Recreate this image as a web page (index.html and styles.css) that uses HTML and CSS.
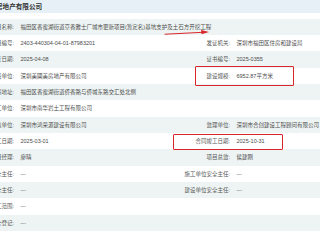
FILE: index.html
```html
<!DOCTYPE html>
<html lang="zh">
<head>
<meta charset="utf-8">
<link rel="stylesheet" href="styles.css">
</head>
<body>
<div class="page">
  <div class="title"><span>深圳美國美房地产有限公司</span></div>
  <div class="table">
    <div class="row alt">
      <div class="lab"><span>项目名称:</span></div>
      <div class="val wide">福田区香蜜湖街道京香雅士厂城市更新项目(暂定名)基坑支护及土石方开挖工程</div>
    </div>
    <div class="row">
      <div class="lab"><span>项目编号:</span></div>
      <div class="val">2403-440304-04-01-87983201</div>
      <div class="lab"><span>发证机关:</span></div>
      <div class="val">深圳市福田区住房和建设局</div>
    </div>
    <div class="row alt">
      <div class="lab"><span>发证日期:</span></div>
      <div class="val">2025-04-08</div>
      <div class="lab"><span>证书编号:</span></div>
      <div class="val">2025-0355</div>
    </div>
    <div class="row">
      <div class="lab"><span>建设单位:</span></div>
      <div class="val">深圳美國美房地产有限公司</div>
      <div class="lab"><span>建设规模:</span></div>
      <div class="val">6952.87平方米</div>
    </div>
    <div class="row alt">
      <div class="lab"><span>工程地址:</span></div>
      <div class="val wide">福田区香蜜湖街道侨香路与侨城东路交汇处北侧</div>
    </div>
    <div class="row">
      <div class="lab"><span>施工单位:</span></div>
      <div class="val wide">深圳市南华岩土工程有限公司</div>
    </div>
    <div class="row alt">
      <div class="lab"><span>总包单位:</span></div>
      <div class="val">深圳市鸿荣源建设有限公司</div>
      <div class="lab"><span>监理单位:</span></div>
      <div class="val">深圳市合创建设工程顾问有限公司</div>
    </div>
    <div class="row">
      <div class="lab"><span>合同开工日期:</span></div>
      <div class="val">2025-03-01</div>
      <div class="lab"><span>合同竣工日期:</span></div>
      <div class="val">2025-10-31</div>
    </div>
    <div class="row alt">
      <div class="lab"><span>项目经理:</span></div>
      <div class="val">廖晴</div>
      <div class="lab"><span>项目总监:</span></div>
      <div class="val">侯建刚</div>
    </div>
    <div class="row">
      <div class="lab"><span>施工单位安全主任:</span></div>
      <div class="val">---</div>
      <div class="lab"><span>施工单位安全主任:</span></div>
      <div class="val">---</div>
    </div>
    <div class="row alt">
      <div class="lab"><span>监理单位安全主任:</span></div>
      <div class="val">---</div>
      <div class="lab"><span>建设单位安全主任:</span></div>
      <div class="val">---</div>
    </div>
    <div class="row">
      <div class="lab"><span>施工范围:</span></div>
      <div class="val wide">---</div>
    </div>
    <div class="row alt">
      <div class="lab"><span>质量安全登记:</span></div>
      <div class="val wide">---</div>
    </div>
    <div class="row">
      <div class="lab"><span></span></div>
      <div class="val wide"></div>
    </div>
  </div>
  <div class="mark box1"></div>
  <div class="mark box2"></div>
  <svg class="arrow" width="50" height="8" viewBox="0 0 50 8">
    <path d="M2 6.2 L42 4.2" stroke="#d9262b" stroke-width="1" fill="none" stroke-linecap="round"/>
    <path d="M38 2 L46 4 L38.5 6.3 Z" fill="#d9262b"/>
  </svg>
</div>
</body>
</html>
```
FILE: styles.css
```css
html, body {
  margin: 0;
  padding: 0;
  background: #ffffff;
}
body {
  width: 320px;
  height: 240px;
  overflow: hidden;
  font-family: "Liberation Sans", "Noto Sans CJK SC", sans-serif;
  color: #4a4a4a;
}
.page {
  position: relative;
  width: 320px;
  height: 240px;
  overflow: hidden;
}
.title {
  height: 13px;
  width: 320px;
  background: #e6f0f6;
  display: flex;
  overflow: hidden;
  font-size: 6.6px;
  font-weight: bold;
  line-height: 13px;
  color: #333;
  white-space: nowrap;
}
.title span {
  margin-left: -37px;
}
.table {
  margin-top: 5.8px;
  display: flex;
  flex-direction: column;
}
.row {
  display: grid;
  grid-template-columns: 14px 166px 50px 1fr;
  height: 16.33px;
  font-size: 5.5px;
  line-height: 16.33px;
  white-space: nowrap;
}
.row.alt {
  background: #eef4f3;
}
.lab {
  display: flex;
  justify-content: flex-end;
  overflow: hidden;
  color: #555;
}
.val {
  padding-left: 6.5px;
  overflow: hidden;
}
.val.wide {
  grid-column: 2 / 5;
}
.mark {
  position: absolute;
  border: 1px solid #d9262b;
  border-radius: 1px;
  box-sizing: border-box;
}
.box1 {
  left: 195px;
  top: 66px;
  width: 99px;
  height: 20px;
}
.box2 {
  left: 173px;
  top: 134px;
  width: 110px;
  height: 16px;
}
.arrow {
  position: absolute;
  left: 163px;
  top: 28px;
}
```
